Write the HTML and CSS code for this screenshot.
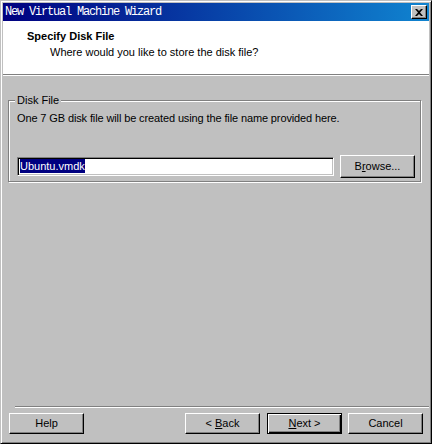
FILE: index.html
```html
<html lang="en">
<head>
  <meta charset="UTF-8" />
  <title>New Virtual Machine Wizard</title>
  <link rel="stylesheet" href="styles.css">
</head>
<body>
  <div class="window">
    <div class="titlebar">
      <span class="title">New Virtual Machine Wizard</span>
      <span class="close">
        <svg width="8" height="7" viewBox="0 0 8 7"><path d="M0 0h2l2 2 2-2h2l-3 3.5 3 3.5h-2l-2-2-2 2h-2l3-3.5z" fill="#000"/></svg>
      </span>
    </div>

    <div class="header">
      <div class="heading">Specify Disk File</div>
      <div class="subheading">Where would you like to store the disk file?</div>
    </div>

    <div class="content">
      <fieldset class="group">
        <legend>Disk File</legend>
        <div class="note">One 7 GB disk file will be created using the file name provided here.</div>
        <div class="file-row">
          <div class="textbox"><span class="selected">Ubuntu.vmdk</span></div>
          <button class="btn">B<u>r</u>owse...</button>
        </div>
      </fieldset>
    </div>

    <div class="separator"></div>
    <div class="buttons">
      <button class="btn">Help</button>
      <div class="spacer"></div>
      <button class="btn">&lt; <u>B</u>ack</button>
      <button class="btn default"><u>N</u>ext &gt;</button>
      <button class="btn last">Cancel</button>
    </div>
  </div>
</body>
</html>
```

FILE: styles.css
```css
body {
  margin: 0;
  font-family: "Liberation Sans", Arial, sans-serif;
  font-size: 11px;
  line-height: 13px;
  color: #000;
}

.window {
  width: 432px;
  height: 444px;
  box-sizing: border-box;
  border: 1px solid;
  border-color: #c0c0c0 #000 #000 #c0c0c0;
  box-shadow: inset 1px 1px #fff, inset -1px -1px #808080;
  padding: 2px;
  background: #c0c0c0;
  display: flex;
  flex-direction: column;
}

/* barre de titre */
.titlebar {
  height: 18px;
  flex: none;
  display: flex;
  align-items: center;
  justify-content: space-between;
  padding: 0 2px;
  background: linear-gradient(90deg, #000080, #1084d0);
}

.title {
  color: #fff;
  font-family: "Liberation Mono", monospace;
  font-size: 12px;
  letter-spacing: -1.2px;
}

.close {
  width: 16px;
  height: 14px;
  box-sizing: border-box;
  background: #c0c0c0;
  border: 1px solid;
  border-color: #fff #000 #000 #fff;
  box-shadow: inset -1px -1px #808080;
  display: flex;
  align-items: center;
  justify-content: center;
}

/* entete blanche */
.header {
  height: 54px;
  box-sizing: border-box;
  flex: none;
  background: #fff;
  border-bottom: 1px solid #808080;
  padding: 9px 0 0 24px;
}

.heading {
  font-weight: bold;
}

.subheading {
  margin-top: 3px;
  padding-left: 23px;
}

.content {
  flex: 1;
  border-top: 1px solid #fff;
  padding: 18px 0 0 5px;
}

.group {
  width: 413px;
  box-sizing: border-box;
  margin: 0;
  padding: 5px 5px 3px 8px;
  border: 1px solid #808080;
  box-shadow: inset 1px 1px #fff, 1px 1px #fff;
  min-width: 0;
}

.group legend {
  padding: 0 2px;
  margin-left: -2px;
  background: #c0c0c0;
}

.note {
  letter-spacing: -0.12px;
}

.file-row {
  display: flex;
  align-items: center;
  gap: 6px;
  margin-top: 30px;
}

.textbox {
  flex: 1;
  height: 19px;
  box-sizing: border-box;
  background: #fff;
  border: 1px solid;
  border-color: #808080 #fff #fff #808080;
  box-shadow: inset 1px 1px #000, inset -1px -1px #c0c0c0;
  padding: 1px 2px;
}

.selected {
  display: inline-block;
  height: 14px;
  line-height: 14px;
  background: #000080;
  color: #fff;
}

.btn {
  width: 75px;
  height: 23px;
  box-sizing: border-box;
  padding: 0;
  font: inherit;
  color: #000;
  background: #c0c0c0;
  border: 1px solid;
  border-color: #fff #000 #000 #fff;
  box-shadow: inset -1px -1px #808080;
  flex: none;
}

.btn u {
  text-decoration: underline;
}

.separator {
  flex: none;
  margin-left: 12px;
  border-top: 1px solid #808080;
  border-bottom: 1px solid #fff;
}

.buttons {
  flex: none;
  display: flex;
  gap: 7px;
  padding: 5px 6px 7px 6px;
}

.buttons .btn {
  height: 21px;
}

.spacer {
  flex: 1;
}

.btn.default {
  border-color: #000;
  box-shadow: inset 1px 1px #fff, inset -1px -1px #000, inset -2px -2px #808080;
}

.btn.last {
  margin-left: -1px;
}
```
